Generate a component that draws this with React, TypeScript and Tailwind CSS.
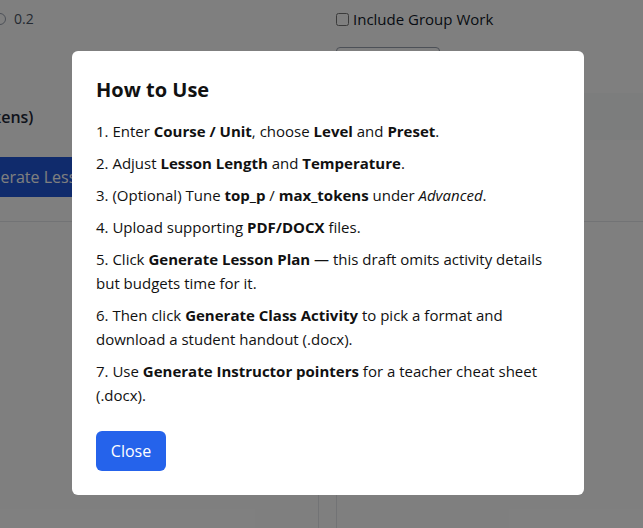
import React from "react";

const font = { fontFamily: '"Open Sans", "Noto Sans", sans-serif' };

function Background() {
  return (
    <div className="min-h-[528px] bg-white text-gray-800 grid grid-cols-[319px_1fr] gap-[17px]">
      {/* left column */}
      <div className="flex flex-col">
        <div className="flex items-center gap-2 h-[38px] -ml-[6px] text-sm text-gray-600">
          <span className="w-3 h-3 rounded-full border border-gray-400"></span>
          <span>0.2</span>
        </div>
        <div className="h-[64px]"></div>
        <div className="text-base font-semibold h-[30px] -ml-[166px] leading-[30px] whitespace-nowrap">
          Max Output (max_tokens)
        </div>
        <div className="h-[25px]"></div>
        <div className="-ml-[52px] w-[220px] h-[40px] bg-[#2057d8] text-white rounded-md flex items-center px-[22px] text-base whitespace-nowrap">
          Generate Lesson Plan
        </div>
        <div className="h-[24px]"></div>
        <div className="border-t border-gray-200"></div>
        <div className="flex-1 border-r border-gray-200"></div>
      </div>
      {/* right column */}
      <div className="flex flex-col">
        <label className="flex items-center gap-1 h-[38px] text-[15px] text-gray-900">
          <input type="checkbox" className="w-[13px] h-[13px]" readOnly />
          <span>Include Group Work</span>
        </label>
        <div className="h-[9px]"></div>
        <div className="w-[104px] h-[36px] border border-gray-400 rounded"></div>
        <div className="h-[10px]"></div>
        <div className="h-[47px] bg-gray-50"></div>
        <div className="h-[81px]"></div>
        <div className="border-t border-gray-200"></div>
        <div className="flex-1 border-l border-gray-200"></div>
      </div>
    </div>
  );
}

export default function App() {
  return (
    <div className="relative w-[643px] h-[528px] overflow-hidden" style={font}>
      <Background />
      <div className="absolute inset-0 bg-black/50 flex items-start justify-start">
        <div className="mt-[51px] ml-[72px] w-[512px] bg-white rounded-md p-6 text-[15px] leading-6 text-[#111]">
          <h2 className="text-xl font-bold mb-[15px] mt-[1px]">How to Use</h2>
          <div className="flex flex-col gap-2">
            <p>
              1. Enter <b>Course / Unit</b>, choose <b>Level</b> and <b>Preset</b>.
            </p>
            <p>
              2. Adjust <b>Lesson Length</b> and <b>Temperature</b>.
            </p>
            <p>
              3. (Optional) Tune <b>top_p</b> / <b>max_tokens</b> under <i>Advanced</i>.
            </p>
            <p>
              4. Upload supporting <b>PDF/DOCX</b> files.
            </p>
            <p>
              5. Click <b>Generate Lesson Plan</b> — this draft omits activity details but budgets time for it.
            </p>
            <p>
              6. Then click <b>Generate Class Activity</b> to pick a format and download a student handout (.docx).
            </p>
            <p>
              7. Use <b>Generate Instructor pointers</b> for a teacher cheat sheet (.docx).
            </p>
          </div>
          <button className="mt-6 w-[70px] h-[40px] bg-[#2563eb] text-white rounded-md text-base">
            Close
          </button>
        </div>
      </div>
    </div>
  );
}
